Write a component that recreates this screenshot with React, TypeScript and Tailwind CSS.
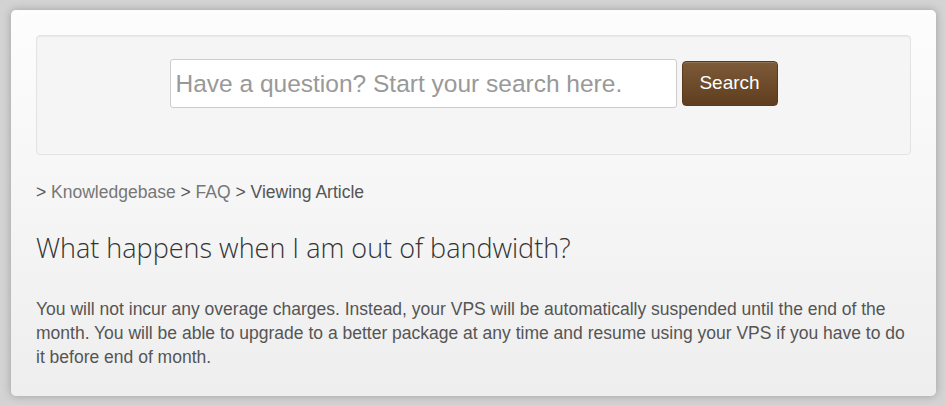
const App: React.FC = () => {
  return (
    <div className="w-[945px] h-[405px] bg-[#d3d3d3] pt-[10px] pl-[11px] pr-[9px] pb-[9px]">
      <div className="h-full rounded-[5px] bg-gradient-to-b from-[#fdfdfd] to-[#eeeeee] shadow-[0_0_8px_rgba(0,0,0,0.25)] px-[25px] pt-[25px] font-['Liberation_Sans',Arial,sans-serif]">
        {/* search well */}
        <div className="h-[120px] rounded-[4px] border border-[#e3e3e3] bg-[#f5f5f5] shadow-[inset_0_1px_1px_rgba(0,0,0,0.05)] flex items-start justify-center gap-[5px] pt-[23px]">
          <input
            type="text"
            placeholder="Have a question? Start your search here."
            className="w-[507px] h-[49px] rounded-[3px] border border-[#cccccc] bg-white px-[5px] text-[24.5px] text-[#555] placeholder:text-[#999] outline-none"
          />
          <button className="mt-[2px] w-[96px] h-[45px] rounded-[4px] border border-[#5a3a1c] bg-gradient-to-b from-[#7d5a38] to-[#5f3e1f] text-white text-[19px] shadow-[inset_0_1px_0_rgba(255,255,255,0.15)]">
            Search
          </button>
        </div>

        <div className="mt-[25px] text-[17.5px] leading-[24px] text-[#555]">
          &gt; <a className="text-[#777]">Knowledgebase</a> &gt;{" "}
          <a className="text-[#777]">FAQ</a> &gt; Viewing Article
        </div>

        <h1 className="mt-[26px] text-[27px] leading-[36px] font-light text-[#333] font-['Open_Sans',sans-serif]">
          What happens when I am out of bandwidth?
        </h1>

        <p className="mt-[31px] text-[17.5px] leading-[24px] text-[#555]">
          You will not incur any overage charges. Instead, your VPS will be
          automatically suspended until the end of the month. You will be able
          to upgrade to a better package at any time and resume using your VPS
          if you have to do it before end of month.
        </p>
      </div>
    </div>
  );
};

export default App;
